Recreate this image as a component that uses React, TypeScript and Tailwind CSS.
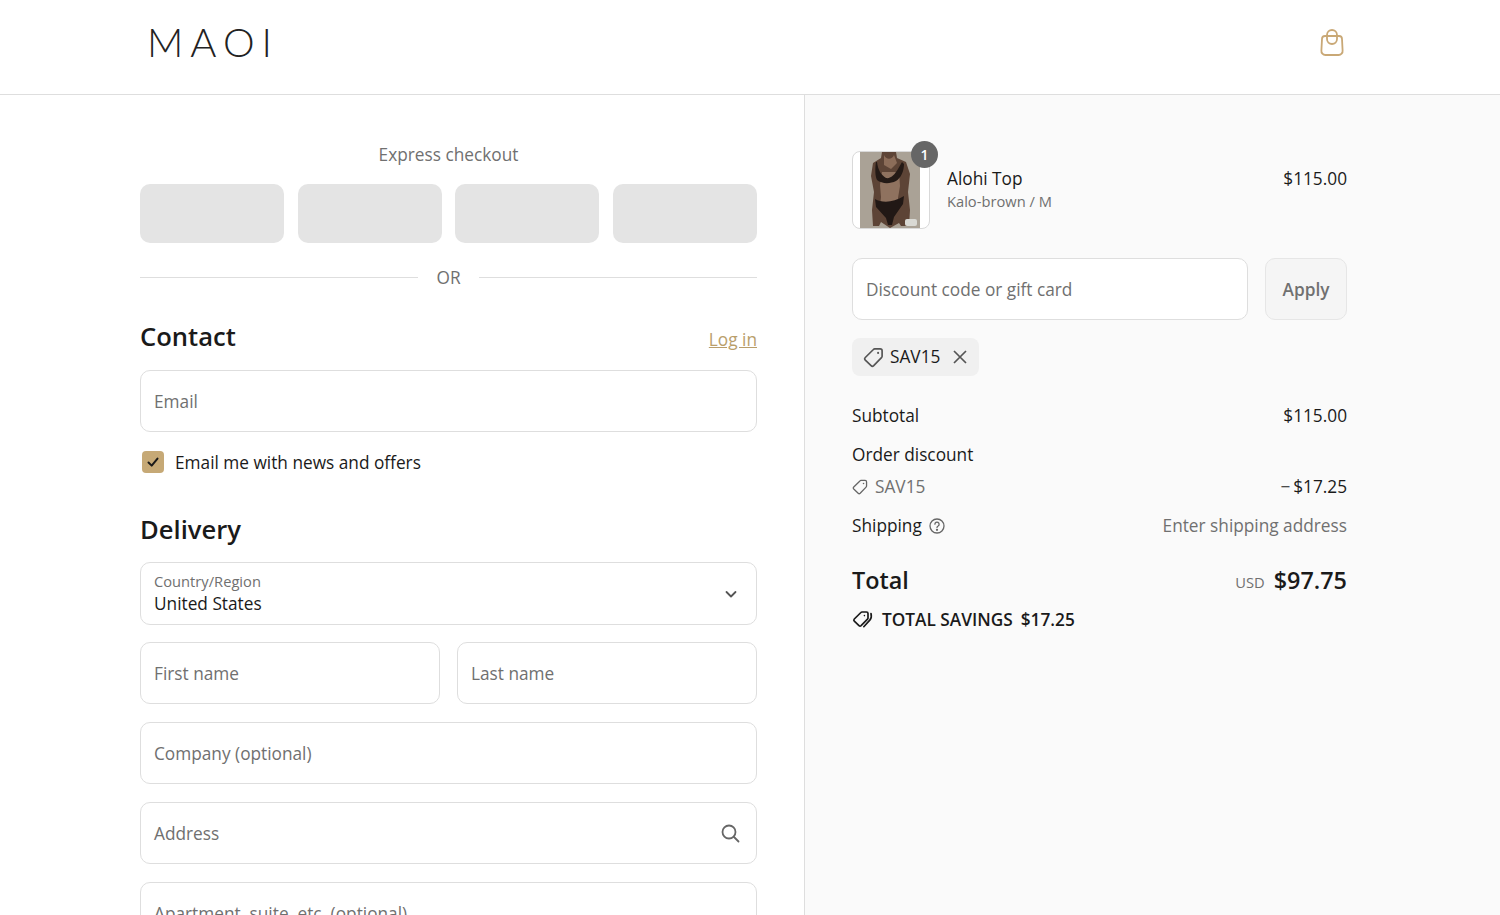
import React from "react";

const Field = ({ label, className = "", children }: { label: string; className?: string; children?: React.ReactNode }) => (
  <div className={`h-[62px] rounded-[10px] border border-[#dedede] bg-white pl-[13px] pr-4 flex items-center justify-between text-[17.25px] text-[#707070] ${className}`}>
    <span className="mt-[2px]">{label}</span>
    {children}
  </div>
);

const Tag = ({ size, color, sw = 1.6 }: { size: number; color: string; sw?: number }) => (
  <svg width={size} height={size} viewBox="0 0 20 20" fill="none" stroke={color} strokeWidth={sw} strokeLinejoin="round">
    <path d="M11.2 1.8h5.2a1.8 1.8 0 0 1 1.8 1.8v5.2a1.8 1.8 0 0 1-.6 1.3l-7.4 7.7a1.8 1.8 0 0 1-2.5 0L2.2 12.5a1.8 1.8 0 0 1 0-2.5l7.7-7.6a1.8 1.8 0 0 1 1.3-.6Z" />
    <circle cx="14.4" cy="5.6" r="1" fill={color} stroke="none" />
  </svg>
);

const Row = ({ className = "", children }: { className?: string; children: React.ReactNode }) => (
  <div className={`flex justify-between items-center ${className}`}>{children}</div>
);

export default function App() {
  return (
    <div className="h-[915px] overflow-hidden bg-white text-[#1a1a1a] font-['Open_Sans',sans-serif]">
      <header className="h-[95px] border-b border-[#dedede] pl-[147px] pr-[156px] flex items-center justify-between">
        <div className="font-['Lato',sans-serif] font-light text-[40px] leading-none tracking-[7px] text-[#222] -mt-[11px]">MAOI</div>
        <svg width="24" height="28" viewBox="0 0 24 28" fill="none" stroke="#c9a876" strokeWidth="1.8" className="-mt-[9px]">
          <path d="M5 7h14a3 3 0 0 1 3 3l.6 11.5a4 4 0 0 1-4 4.5H5.4a4 4 0 0 1-4-4.5L2 10a3 3 0 0 1 3-3Z" />
          <rect x="7" y="1" width="10" height="14" rx="5" />
        </svg>
      </header>

      <main className="flex">
        <section className="w-[805px] shrink-0 border-r border-[#dedede] pl-[140px] pr-[47px] pt-[47px]">
          <div className="text-center text-[17.25px] leading-[26px] text-[#707070]">Express checkout</div>
          <div className="mt-[16px] grid grid-cols-4 gap-[13.5px]">
            {[0, 1, 2, 3].map((i) => (
              <div key={i} className="h-[59px] rounded-[10px] bg-[#e4e4e4]" />
            ))}
          </div>
          <div className="mt-[21px] flex items-center gap-[18px] text-[17.25px] leading-[26px] text-[#707070]">
            <div className="h-px flex-1 bg-[#dedede]" />
            <span className="translate-y-[1px]">OR</span>
            <div className="h-px flex-1 bg-[#dedede]" />
          </div>
          <div className="mt-[28px] flex justify-between items-end">
            <h2 className="text-[25.6px] leading-[38px] font-semibold">Contact</h2>
            <a className="text-[17.25px] leading-[26px] mb-[3px] text-[#b99e6b] underline">Log in</a>
          </div>
          <Field label="Email" className="mt-[14px]" />
          <label className="mt-[18px] ml-[2px] flex items-center gap-[11px] text-[17.25px] leading-[24px]">
            <span className="w-[22px] h-[22px] rounded-[4px] bg-[#c6a976] flex items-center justify-center">
              <svg width="14" height="14" viewBox="0 0 14 14" fill="none" stroke="#1a1a1a" strokeWidth="2" strokeLinecap="round" strokeLinejoin="round">
                <path d="M2.5 7.5 5.7 10.6 11.5 3.6" />
              </svg>
            </span>
            <span className="translate-y-[1px]">Email me with news and offers</span>
          </label>
          <h2 className="mt-[37px] text-[25.6px] leading-[38px] font-semibold">Delivery</h2>
          <div className="mt-[13px] h-[63px] rounded-[10px] border border-[#dedede] pl-[13px] pr-[18px] flex items-center justify-between">
            <div>
              <div className="text-[14.7px] leading-[20px] text-[#707070]">Country/Region</div>
              <div className="text-[17.25px] leading-[25px]">United States</div>
            </div>
            <svg width="14" height="14" viewBox="0 0 14 14" fill="none" stroke="#555" strokeWidth="1.8" strokeLinecap="round" strokeLinejoin="round">
              <path d="M2.5 5 7 9.5 11.5 5" />
            </svg>
          </div>
          <div className="mt-[17px] grid grid-cols-2 gap-[17px]">
            <Field label="First name" />
            <Field label="Last name" />
          </div>
          <Field label="Company (optional)" className="mt-[18px]" />
          <Field label="Address" className="mt-[18px]">
            <svg width="20" height="20" viewBox="0 0 20 20" fill="none" stroke="#666" strokeWidth="1.8" strokeLinecap="round">
              <circle cx="9" cy="9" r="6.5" />
              <path d="m14 14 4.5 4.5" />
            </svg>
          </Field>
          <Field label="Apartment, suite, etc. (optional)" className="mt-[18px]" />
        </section>

        <aside className="flex-1 h-[820px] bg-[#fafafa] pl-[47px] pr-[153px] pt-[56px]">
          <div className="flex items-start">
            <div className="relative w-[78px] h-[78px] rounded-[8px] border border-[#d9d9d9] bg-white shrink-0">
              <svg viewBox="0 0 60 76" width="60" height="76" className="ml-[7px]">
                <rect width="60" height="76" fill="#aaa296" />
                <path d="M22 0h14l1 6 9 4 4 12-2 18 2 18-1 16H41l-2-3-9 5-9-6-2 4H13l-1-16 2-18-3-16 2-13 8-5Z" fill="#5d4436" />
                <path d="M22 20h17l1 14-2 12 1 10-9 9-10-10 1-10-1-12Z" fill="#8f725f" />
                <path d="M24 3c2 5 8 5 10 0l3 8-6 6-7-4Z" fill="#8c6d59" />
                <path d="M17 10c1 8 4 13 9 16 5 1 9-4 12-9l4-7 2 2c0 7-3 14-8 17-6 3-14 3-19-1-2-4-2-12-1-18Z" fill="#241a16" />
                <path d="M15 47c7 4 18 4 29-3l-1 8-9 13-2 8h-4l-2-7-10-11Z" fill="#211815" />
                <rect x="45" y="67" width="12" height="7" rx="2" fill="#d9d9d4" />
              </svg>
              <span className="absolute -top-[11px] -right-[9px] w-[27px] h-[27px] rounded-full bg-[#666] text-white text-[14px] font-semibold flex items-center justify-center">1</span>
            </div>
            <div className="ml-[17px] mt-[15px] flex-1">
              <Row>
                <span className="text-[17.25px] leading-[26px]">Alohi Top</span>
                <span className="text-[17.25px] leading-[26px]">$115.00</span>
              </Row>
              <div className="-mt-[1px] text-[14.7px] leading-[20px] text-[#707070]">Kalo-brown / M</div>
            </div>
          </div>

          <div className="mt-[29px] flex gap-[17px]">
            <div className="flex-1 h-[62px] rounded-[10px] border border-[#dedede] bg-white pl-[13px] pt-[2px] flex items-center text-[17.25px] text-[#707070]">Discount code or gift card</div>
            <div className="w-[82px] h-[62px] rounded-[10px] border border-[#e6e6e6] bg-[#f5f5f5] pt-[2px] flex items-center justify-center text-[17.25px] font-semibold text-[#707070]">Apply</div>
          </div>

          <div className="mt-[18px] inline-flex items-center h-[38px] w-[127px] rounded-[8px] bg-[#f0f0f0] pl-[11px] text-[17.25px]">
            <Tag size={21} color="#555" />
            <span className="ml-[6px]">SAV15</span>
            <svg width="16" height="16" viewBox="0 0 16 16" fill="none" stroke="#555" strokeWidth="1.7" className="ml-[12px]">
              <path d="m2 2 12 12M14 2 2 14" />
            </svg>
          </div>

          <div className="text-[17.25px] leading-[26px]">
            <Row className="mt-[27px]">
              <span>Subtotal</span>
              <span>$115.00</span>
            </Row>
            <div className="mt-[13px]">Order discount</div>
            <Row className="mt-[6px]">
              <span className="flex items-center gap-[7px] text-[#707070]">
                <Tag size={16} color="#666" />
                SAV15
              </span>
              <span>−&#8201;$17.25</span>
            </Row>
            <Row className="mt-[13px]">
              <span className="flex items-center gap-[7px]">
                Shipping
                <svg width="16" height="16" viewBox="0 0 16 16" fill="none" stroke="#666" strokeWidth="1.3" strokeLinecap="round">
                  <circle cx="8" cy="8" r="7" />
                  <path d="M5.9 6.2a2.1 2.1 0 1 1 3.2 1.8c-.7.4-1.1.8-1.1 1.6" />
                  <circle cx="8" cy="11.8" r=".5" fill="#666" />
                </svg>
              </span>
              <span className="text-[#707070]">Enter shipping address</span>
            </Row>
          </div>

          <Row className="mt-[24px]">
            <span className="text-[23.4px] leading-[34px] font-semibold">Total</span>
            <span className="flex items-center gap-[9px]">
              <span className="text-[14.7px] mt-[5px] text-[#707070]">USD</span>
              <span className="text-[23.4px] leading-[34px] font-semibold">$97.75</span>
            </span>
          </Row>
          <div className="mt-[10px] flex items-center gap-[8px] text-[17.25px] leading-[26px] font-semibold">
            <svg width="22" height="20" viewBox="0 0 22 20" fill="none" stroke="#1a1a1a" strokeWidth="1.7" strokeLinejoin="round" strokeLinecap="round">
              <path d="M10 2h4.5A1.5 1.5 0 0 1 16 3.5V8a1.5 1.5 0 0 1-.5 1.1l-6.4 6.6a1.5 1.5 0 0 1-2.1 0l-4.7-4.6a1.5 1.5 0 0 1 0-2.1l6.6-6.5A1.5 1.5 0 0 1 10 2Z" />
              <path d="M19 3.5c.6 2.4.4 4.8-1 6.4l-6.2 6.8" />
              <circle cx="12.4" cy="5.6" r=".8" fill="#1a1a1a" stroke="none" />
            </svg>
            <span>TOTAL SAVINGS</span>
            <span>$17.25</span>
          </div>
        </aside>
      </main>
    </div>
  );
}
